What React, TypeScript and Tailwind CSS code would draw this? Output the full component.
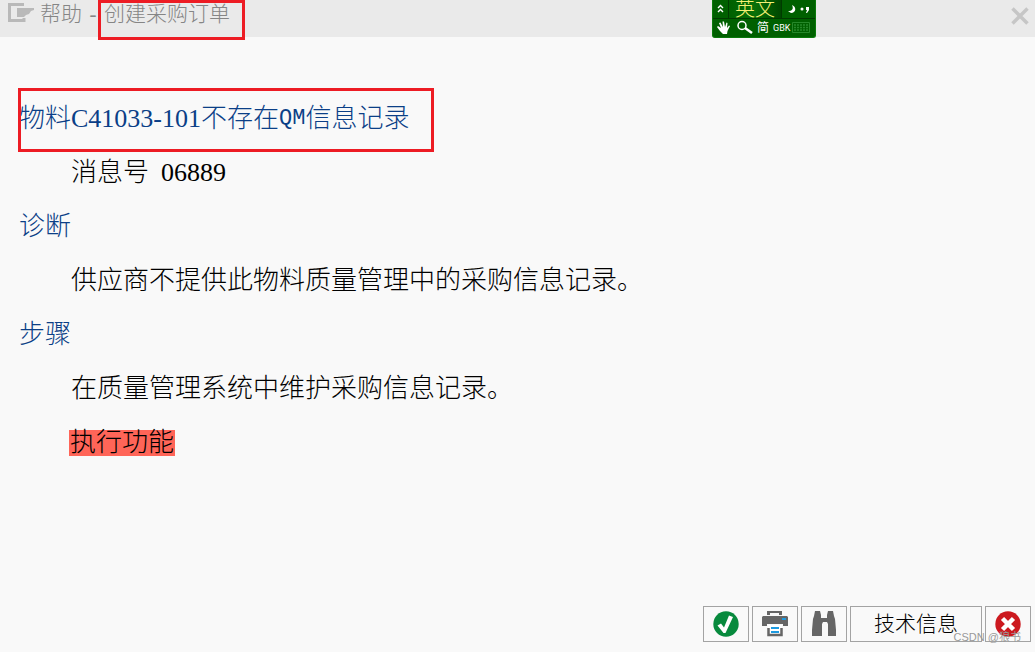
import type { ReactNode } from 'react';

function MenuIcon() {
  return (
    <svg width="26" height="19" viewBox="0 0 26 19" aria-hidden="true">
      <path d="M16 1.500H1.500v16H16V15" fill="none" stroke="#b9b9b9" strokeWidth="3" />
      <path d="M9 5h17v2l-3 1-2 3-3 1-2 2H9z" fill="#b9b9b9" />
    </svg>
  );
}

function CloseIcon() {
  return (
    <svg width="18" height="18" viewBox="0 0 18 18" aria-hidden="true">
      <path d="M1.500 1.500l15 15M16.500 1.500l-15 15" stroke="#c6c6c6" strokeWidth="3.500" />
    </svg>
  );
}

function InputMethodBar() {
  return (
    <div className="absolute top-0 left-[712px] h-[38px] w-[104px] rounded-b-[3px] border-x border-b border-[#0a7a0a] bg-[#006000] text-white">
      <div className="flex h-[19px] items-center border-b border-[#003b00]">
        <svg width="15" height="18" viewBox="0 0 15 18" fill="none" stroke="#fff" strokeWidth="1.4" aria-hidden="true">
          <path d="M5 8l2.500-2.500L10 8M5 12l2.500-2.500L10 12" />
        </svg>
        <span className="flex h-[18px] w-[54px] items-center justify-center border-x border-[#003b00] bg-gradient-to-r from-[#006000] via-[#087008] to-[#004700] text-[20px] leading-[18px] font-light text-[#f5ef75]">
          英文
        </span>
        <svg width="33" height="18" viewBox="0 0 33 18" fill="#fff" aria-hidden="true">
          <path d="M10 5c5 2 4 8-1 8l-3-2c4 0 6-2 4-6z" />
          <circle cx="20" cy="9" r="1.5" />
          <path d="M24 7h3v3l-2 3h-1l1-3h-1z" />
        </svg>
      </div>
      <div className="flex h-[18px] items-center">
        <svg width="44" height="18" viewBox="0 0 44 18" aria-hidden="true">
          <path
            d="M10 15l-3-3-3-4 1-1 3 2L6 4l1.500-.5L10 8l-.5-5.500H11l1 5.500 1.500-4.500 1 .5-.5 5 2-2.500 1 .5-2.500 5-.5 3z"
            fill="#fff"
          />
          <circle cx="29" cy="6.500" r="4" fill="none" stroke="#fff" strokeWidth="1.5" />
          <path d="M32 9l7 5" stroke="#fff" strokeWidth="2.5" />
        </svg>
        <span className="w-4 text-[12px] leading-[18px] font-normal">简</span>
        <span className="w-[18px] font-['Roboto',sans-serif] text-[9px] leading-[18px] font-normal">GBK</span>
        <svg width="20" height="18" viewBox="0 0 20 18" fill="none" aria-hidden="true">
          <path d="M1.500 3.500h17v10h-17z" stroke="#26882a" />
          <path d="M3 6h14M3 8.500h14M3 11h14" stroke="#26882a" strokeWidth="1.3" strokeDasharray="2 1" />
        </svg>
      </div>
    </div>
  );
}

function CheckIcon() {
  return (
    <svg width="26" height="26" viewBox="0 0 26 26" aria-hidden="true">
      <circle cx="13" cy="13" r="12.700" fill="#078a3d" />
      <path d="M4.500 14.500l3.500-2 3 4L16 4.500l4 1.500-7.500 16h-2z" fill="#fff" />
    </svg>
  );
}

function PrinterIcon() {
  return (
    <svg width="26" height="26" viewBox="0 0 26 26" aria-hidden="true">
      <path d="M5 4V0h15v4h-3V2H8v2z" fill="#666" />
      <path d="M1 5h24l1 1v9h-5v-2H5v2H0V6z" fill="#666" />
      <path d="M20 7h4v2h-4z" fill="#1d9ae0" />
      <path d="M6 14h14v11H6z" fill="#fff" />
      <path d="M6.500 17v7h13v-7" fill="none" stroke="#666" strokeWidth="2.500" />
      <path d="M9 16h8v2H9zM9 20h8v2H9z" fill="#1d9ae0" />
    </svg>
  );
}

function BinocularsIcon() {
  return (
    <svg width="26" height="26" viewBox="0 0 26 26" fill="#666" aria-hidden="true">
      <path d="M4 0h5l1 4v3h6V4l1-4h5l1 5 1 3 1 11v6h-8V13l-1-2h-4l-1 2v12H1v-6L2 8l1-3z" />
    </svg>
  );
}

function CancelIcon() {
  return (
    <svg width="26" height="26" viewBox="0 0 26 26" aria-hidden="true">
      <circle cx="13" cy="13" r="12.700" fill="#cc191f" />
      <path d="M7.500 7.500l11 11M18.500 7.500l-11 11" stroke="#fff" strokeWidth="4.500" />
    </svg>
  );
}

function ToolButton({ label, children }: { label: string; children: ReactNode }) {
  return (
    <button
      type="button"
      aria-label={label}
      className="flex h-9 w-[46px] items-center justify-center border border-[#a3a3a3]"
    >
      {children}
    </button>
  );
}

export default function App() {
  return (
    <div className="flex min-h-screen flex-col bg-[#f9f9f9] font-['Liberation_Serif','Noto_Sans_CJK_SC',serif] font-light text-black">
      <header className="relative flex h-[37px] items-start justify-between bg-[#eaeaea] pr-1.5 pl-2">
        <div className="flex items-start text-[21px] leading-7 text-[#858585]">
          <button type="button" aria-label="菜单" className="mt-[3px] mr-1.5">
            <MenuIcon />
          </button>
          <span>帮助</span>
          <span className="w-[22px] text-center">-</span>
          <h1>创建采购订单</h1>
        </div>
        <button type="button" aria-label="关闭" className="mt-[7px]">
          <CloseIcon />
        </button>
        <div className="absolute top-0 left-[98px] h-10 w-[147px] border-3 border-[#ed1c24]" />
        <InputMethodBar />
      </header>

      <main className="flex-1 px-[19px] pt-[55px] text-[26px] leading-[54px]">
        <h2 className="relative flex text-[#0b3f87]">
          <span>物料C41033-101不存在</span>
          <span className="font-['Liberation_Mono',monospace] text-[22px]">QM</span>
          <span>信息记录</span>
          <span className="absolute -top-1 -left-px h-16 w-[416px] border-3 border-[#ed1c24]" />
        </h2>
        <p className="flex gap-3 pl-[52px]">
          <span>消息号</span>
          <span>06889</span>
        </p>
        <h3 className="text-[#0b3f87]">诊断</h3>
        <p className="pl-[52px]">供应商不提供此物料质量管理中的采购信息记录。</p>
        <h3 className="text-[#0b3f87]">步骤</h3>
        <p className="pl-[52px]">在质量管理系统中维护采购信息记录。</p>
        <div className="flex h-[54px] items-center pl-[50px]">
          <a href="#execute" className="bg-[#ff6558] px-px leading-[26px]">
            执行功能
          </a>
        </div>
      </main>

      <footer className="relative flex justify-end gap-[3px] pr-1 pb-2.5">
        <ToolButton label="确认">
          <CheckIcon />
        </ToolButton>
        <ToolButton label="打印">
          <PrinterIcon />
        </ToolButton>
        <ToolButton label="查找">
          <BinocularsIcon />
        </ToolButton>
        <button type="button" className="h-9 w-[132px] border border-[#a3a3a3] text-[21px] leading-8">
          技术信息
        </button>
        <ToolButton label="取消">
          <CancelIcon />
        </ToolButton>
        <span className="absolute right-[14px] bottom-[7px] font-['Liberation_Sans','Noto_Sans_CJK_SC',sans-serif] text-[11px] leading-4 font-normal text-[#999]">
          CSDN @狼书
        </span>
      </footer>
    </div>
  );
}
